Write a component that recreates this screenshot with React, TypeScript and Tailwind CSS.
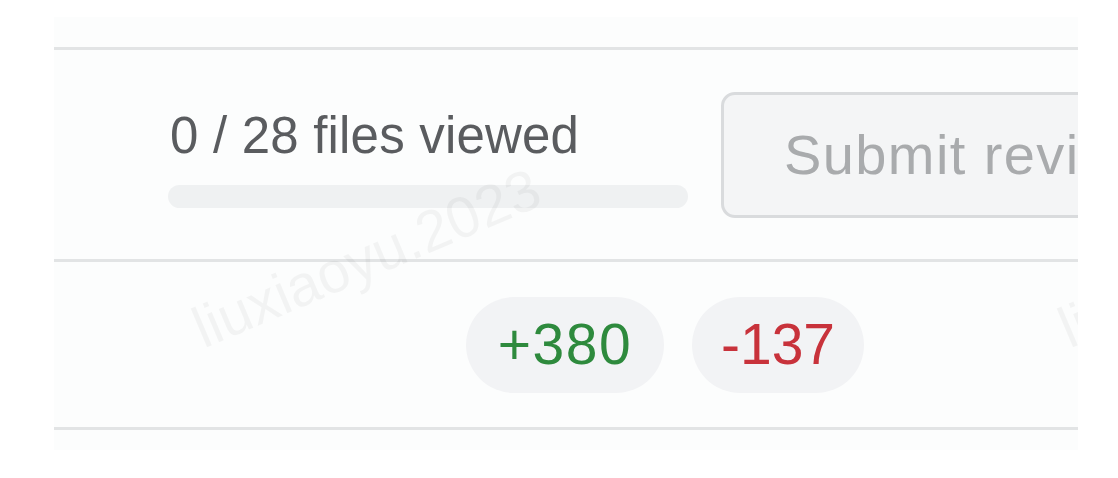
import React from "react";

const font = { fontFamily: '"Liberation Sans", Arial, sans-serif' };

function Watermark({ className }: { className: string }) {
  return (
    <span
      className={`pointer-events-none absolute whitespace-nowrap text-[58px] leading-[66px] text-black/[0.04] -rotate-[23deg] ${className}`}
    >
      liuxiaoyu.2023
    </span>
  );
}

function Pill({ children, className }: { children: React.ReactNode; className: string }) {
  return (
    <span
      className={`flex h-[96px] items-center justify-center rounded-full bg-[#f2f3f5] text-[57px] leading-[57px] ${className}`}
    >
      {children}
    </span>
  );
}

export default function App() {
  return (
    <div className="h-[478px] w-[1118px] bg-white pl-[54px] pt-[17px]" style={font}>
      <div className="relative h-[433px] w-[1024px] overflow-hidden bg-[#fcfdfd]">
        <div className="h-[30px]" />
        <div className="h-[3px] bg-[#e2e4e5]" />

        {/* review progress */}
        <div className="flex h-[209px] items-center pl-[114px]">
          <div className="mt-[9px] flex w-[520px] shrink-0 flex-col">
            <span className="pl-[2px] text-[51px] leading-[51px] tracking-[0.2px] text-[#5a5c5f]">
              0 / 28 files viewed
            </span>
            <div className="mt-[24px] h-[23px] rounded-full bg-[#eff1f2]" />
          </div>
          <button className="ml-[33px] flex h-[126px] w-[500px] shrink-0 items-center whitespace-nowrap rounded-[14px] border-[3px] border-[#d9dbdd] bg-[#f4f5f6] pl-[60px] text-left text-[56px] leading-[56px] tracking-[1.4px] text-[#a9abad]">
            Submit review
          </button>
        </div>

        <div className="h-[3px] bg-[#e2e4e5]" />

        {/* diff stats */}
        <div className="flex h-[165px] items-center gap-[28px] pl-[412px]">
          <Pill className="w-[198px] tracking-[1.5px] text-[#2e8a3d]">+380</Pill>
          <Pill className="w-[172px] text-[#c8323b]">-137</Pill>
        </div>

        <div className="h-[3px] bg-[#e2e4e5]" />

        <Watermark className="left-[127px] top-[208px]" />
        <Watermark className="left-[993px] top-[208px]" />
      </div>
    </div>
  );
}
